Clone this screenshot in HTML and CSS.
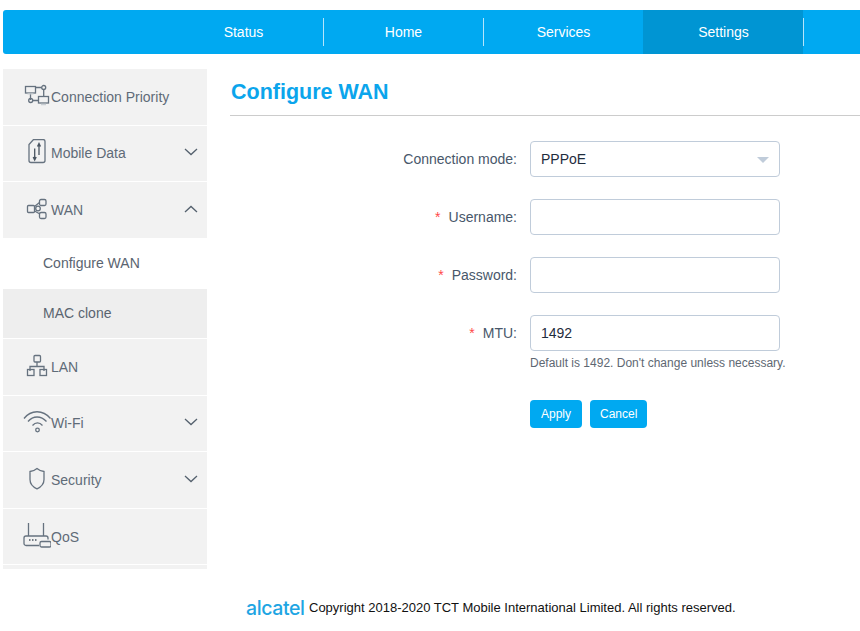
FILE: index.html
```html
<!DOCTYPE html>
<html lang="en">
<head>
<meta charset="utf-8">
<title>Configure WAN</title>
<link rel="stylesheet" href="styles.css">
</head>
<body>
<header class="topbar">
  <nav class="tabs">
    <a class="tab">Status</a>
    <a class="tab">Home</a>
    <a class="tab tab-plain">Services</a>
    <a class="tab tab-active">Settings</a>
  </nav>
</header>
<div class="layout">
  <aside class="sidebar">
    <div class="item">
      <svg class="icon" viewBox="0 0 28 28"><rect x="2.5" y="3.5" width="10" height="6.5"/><path d="M12.5 4.5h6M7.5 10v7M9.800 17.500h5.500M20.700 6.500v6.500"/><circle cx="20.700" cy="4.500" r="2"/><circle cx="7.700" cy="17.500" r="2"/><rect x="15.500" y="13.500" width="10" height="6.500"/><path class="faint" d="M18 21.500h5M4.500 10.800h6"/></svg>
      <span>Connection Priority</span>
    </div>
    <div class="item">
      <svg class="icon" viewBox="0 0 28 28"><path d="M10.500.5H20a2 2 0 0 1 2 2v19a2 2 0 0 1-2 2H8a2 2 0 0 1-2-2V5.500z"/><path class="dark" d="M16 16V5M14.500 7.500 16 4.500l1.500 3M11.700 9.500v11M10.200 18l1.500 3 1.500-3"/></svg>
      <span>Mobile Data</span>
      <svg class="chev" viewBox="0 0 14 8"><path d="M1 1l6 5.500L13 1"/></svg>
    </div>
    <div class="item">
      <svg class="icon" viewBox="0 0 28 28"><rect x="4.500" y="9.500" width="7" height="7" rx="1"/><rect x="16.500" y="3.500" width="6.500" height="6" rx="1.500"/><rect x="16.500" y="16.500" width="6.500" height="6" rx="1.500"/><circle cx="15" cy="12.500" r="2.300"/><path d="M11.500 10.500l5-4M11.500 15l5.500 3"/></svg>
      <span>WAN</span>
      <svg class="chev" viewBox="0 0 14 8"><path d="M1 7l6-5.500L13 7"/></svg>
    </div>
    <div class="sub sub-current">Configure WAN</div>
    <div class="sub sub-other">MAC clone</div>
    <div class="item">
      <svg class="icon" viewBox="0 0 28 28"><rect x="11" y="2.500" width="6.500" height="6.500" rx="1"/><path d="M14 9v5M7 18v-4.500h14V18"/><rect x="4.500" y="16.500" width="6.500" height="6"/><rect x="17" y="16.500" width="6.500" height="6"/></svg>
      <span>LAN</span>
    </div>
    <div class="item">
      <svg class="icon" viewBox="0 0 28 28"><path d="M1 9.500C8 .5 20 .5 27.500 9.500M5 12.500c5-6 13-6 18.500 0M9.500 16.500c3-3.500 7-3.500 10 0"/><circle cx="14.500" cy="21" r="1.800"/></svg>
      <span>Wi-Fi</span>
      <svg class="chev" viewBox="0 0 14 8"><path d="M1 1l6 5.500L13 1"/></svg>
    </div>
    <div class="item">
      <svg class="icon" viewBox="0 0 28 28"><path d="M14 2.500c2 1.700 4.500 2.700 7 3v8c0 4-3 7.500-7 9.300-4-1.800-7-5.300-7-9.300v-8c2.500-.3 5-1.300 7-3z"/></svg>
      <span>Security</span>
      <svg class="chev" viewBox="0 0 14 8"><path d="M1 1l6 5.500L13 1"/></svg>
    </div>
    <div class="item item-qos">
      <svg class="icon" viewBox="0 0 28 28"><path d="M5.500 1v13M20.500 1v13M16 23.500H3a2 2 0 0 1-2-2V16a2 2 0 0 1 2-2h20a2 2 0 0 1 2 2v1.500"/><path class="dark" d="M6 18h1.500M9 18h1.500M12 18h1.500"/><rect x="17" y="19.500" width="11" height="5.500" rx="1.500"/></svg>
      <span>QoS</span>
    </div>
    <div class="item"></div>
  </aside>
  <main class="content">
    <h1 class="title">Configure WAN</h1>
    <form class="form">
      <div class="row">
        <label class="label">Connection mode:</label>
        <div class="field">
          <div class="control control-select">PPPoE<span class="caret"></span></div>
        </div>
      </div>
      <div class="row">
        <label class="label"><span class="req">*</span>Username:</label>
        <div class="field"><div class="control"></div></div>
      </div>
      <div class="row">
        <label class="label"><span class="req">*</span>Password:</label>
        <div class="field"><div class="control"></div></div>
      </div>
      <div class="row row-hint">
        <label class="label"><span class="req">*</span>MTU:</label>
        <div class="field">
          <div class="control">1492</div>
          <p class="hint">Default is 1492. Don't change unless necessary.</p>
        </div>
      </div>
      <div class="actions">
        <button type="button" class="btn">Apply</button>
        <button type="button" class="btn">Cancel</button>
      </div>
    </form>
  </main>
</div>
<footer class="footer">
  <span class="logo">alcatel</span>
  <span class="copy">Copyright 2018-2020 TCT Mobile International Limited. All rights reserved.</span>
</footer>
</body>
</html>
```

FILE: styles.css
```css
* { box-sizing: border-box; }
html, body { margin: 0; padding: 0; }
body {
  width: 860px;
  height: 631px;
  overflow: hidden;
  font-family: "Liberation Sans", Arial, sans-serif;
  font-size: 14px;
  color: #48576a;
  background: #fff;
}
.topbar {
  margin: 10px 0 15px 3px;
  height: 44px;
  background: #00a9f1;
  border-radius: 3px 0 0 3px;
  padding-left: 160px;
}
.tabs { display: flex; height: 44px; }
.tab {
  width: 160px;
  height: 44px;
  padding-left: 1px;
  display: flex;
  align-items: center;
  justify-content: center;
  color: #fff;
  font-size: 14px;
  position: relative;
}
.tab::after {
  content: "";
  position: absolute;
  right: -1px;
  top: 8px;
  height: 28px;
  width: 1px;
  background: #b5e5fb;
}
.tab-plain::after { display: none; }
.tab-active { background: #0095d3; }

.layout { display: flex; height: 500px; }
.sidebar {
  width: 204px;
  margin-left: 3px;
  height: 500px;
  overflow: hidden;
  flex: none;
}
.item {
  height: 55.500px;
  margin-bottom: 1px;
  background: #f2f2f2;
  display: flex;
  align-items: center;
  padding-left: 20px;
  color: #5f6b78;
  position: relative;
}
.item-qos span { padding-top: 2px; }
.icon {
  width: 28px;
  height: 28px;
  flex: none;
  fill: none;
  stroke: #66727f;
  stroke-width: 1.300;
}
.icon .dark { stroke: #4a5561; }
.icon .faint { stroke: #c8cdd2; }
.chev {
  position: absolute;
  right: 9px;
  top: 50%;
  width: 14px;
  height: 8px;
  margin-top: -5px;
  fill: none;
  stroke: #55616e;
  stroke-width: 1.300;
}
.sub {
  height: 50px;
  display: flex;
  align-items: center;
  padding: 0 0 2px 40px;
  color: #5a6470;
}
.sub-current { background: #fff; }
.sub-other { background: #eee; height: 49.500px; margin-bottom: 1px; padding-bottom: 1px; }

.content { flex: 1; padding-left: 23px; min-width: 0; }
.title {
  margin: 0;
  height: 47px;
  padding: 10px 0 0 1px;
  font-size: 21.500px;
  line-height: 26px;
  font-weight: 700;
  color: #0ba5ec;
  border-bottom: 1px solid #cccccc;
}
.form { padding-top: 25px; }
.row { display: flex; margin-bottom: 22px; height: 36px; }
.row-hint { margin-bottom: 49px; }
.label {
  width: 287px;
  flex: none;
  text-align: right;
  line-height: 36px;
  color: #48576a;
}
.req { color: #ff4949; margin-right: 8px; }
.field { margin-left: 13px; width: 250px; }
.control {
  width: 250px;
  height: 36px;
  border: 1px solid #c0ccda;
  border-radius: 4px;
  padding: 0 10px;
  line-height: 34px;
  color: #1f2d3d;
  position: relative;
  background: #fff;
}
.caret {
  position: absolute;
  right: 10px;
  top: 15px;
  width: 0;
  height: 0;
  border-left: 6px solid transparent;
  border-right: 6px solid transparent;
  border-top: 6px solid #c0ccda;
}
.hint {
  margin: 5px 0 0;
  width: 280px;
  font-size: 12px;
  line-height: 14px;
  color: #5e6772;
  white-space: nowrap;
}
.actions { display: flex; gap: 8px; padding-left: 300px; }
.btn {
  height: 28px;
  min-width: 52px;
  padding: 0 10px;
  border: 0;
  border-radius: 4px;
  background: #00a9f1;
  color: #fff;
  font-family: inherit;
  font-size: 12px;
  font-weight: 400;
}
.footer {
  display: flex;
  align-items: center;
  gap: 6px;
  padding: 30px 0 0 246px;
}
.logo {
  width: 57px;
  font-family: "Inter", sans-serif;
  font-size: 19.500px;
  font-weight: 500;
  letter-spacing: -.4px;
  line-height: 18px;
  color: #1ea5e3;
  white-space: nowrap;
}
.copy { font-size: 13px; line-height: 18px; color: #111; }
```
